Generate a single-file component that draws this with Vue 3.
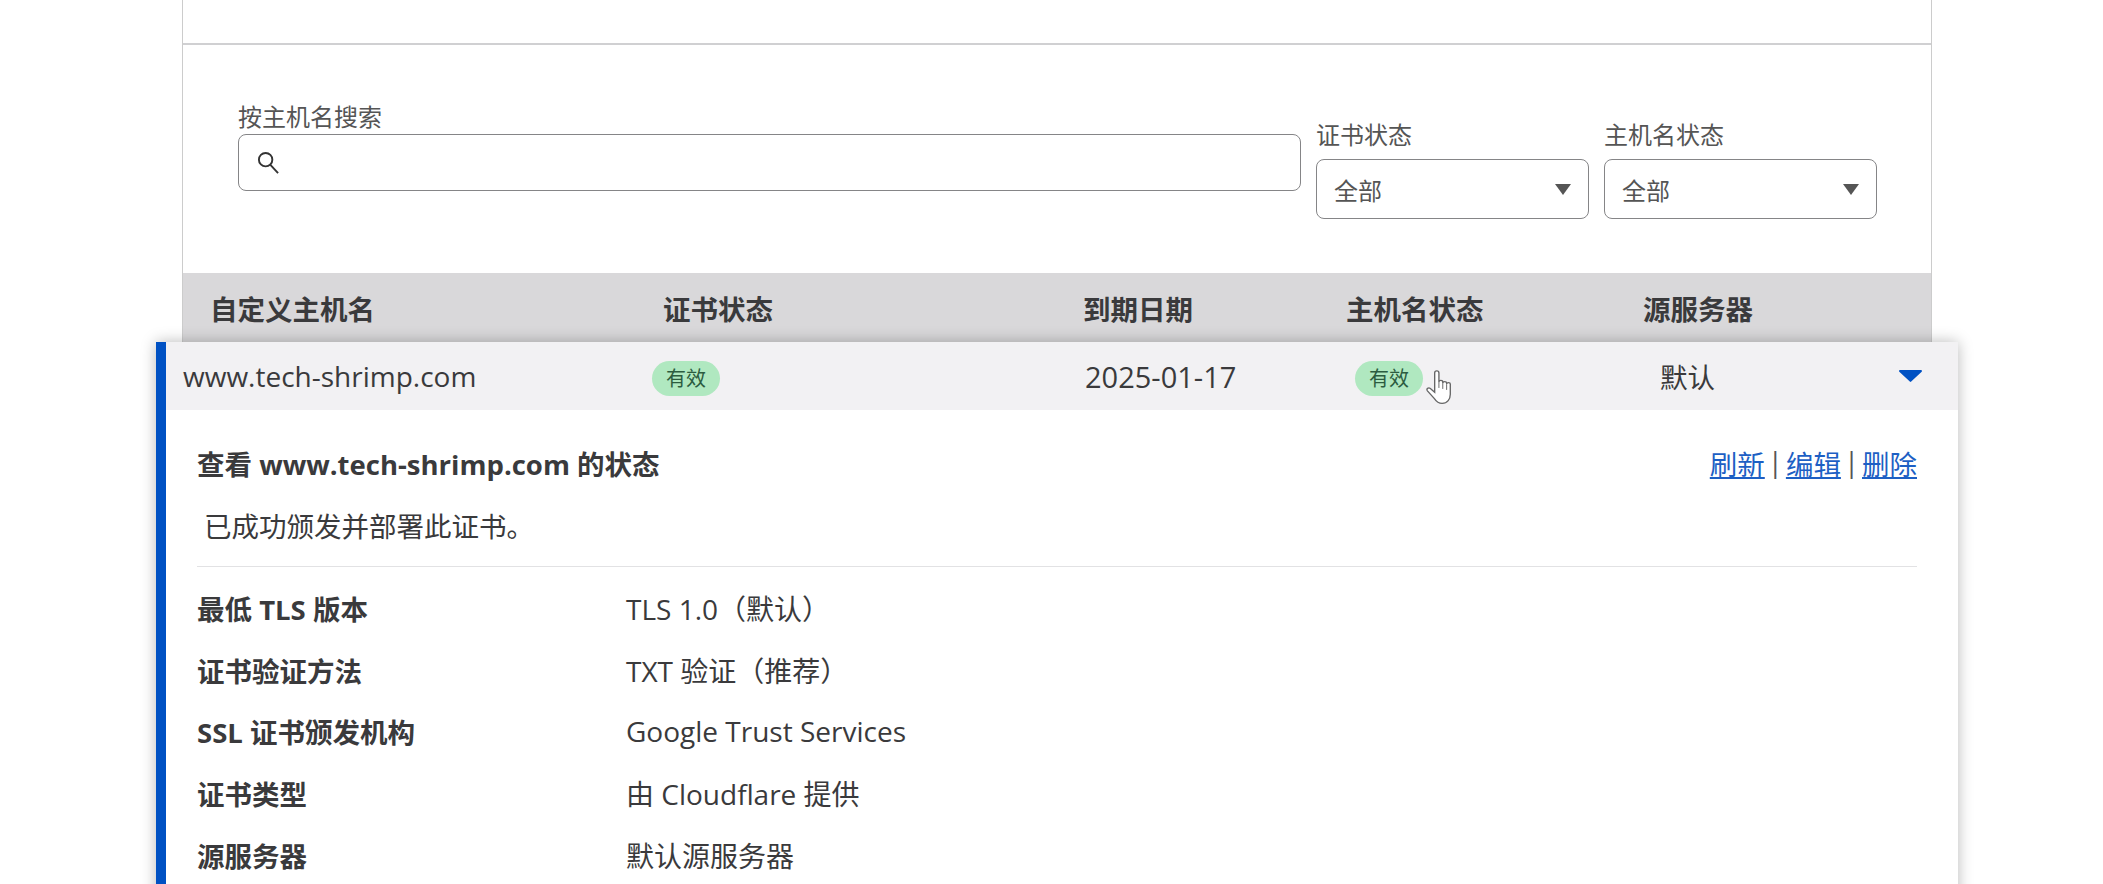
<template>
  <div class="page">
    <div class="box">
      <div class="top-space"></div>

      <div class="filters">
        <div class="field search-field">
          <label>按主机名搜索</label>
          <div class="search-input">
            <svg class="search-icon" viewBox="0 0 24 24">
              <circle cx="9" cy="9" r="7" />
              <path d="M14 14.5l8 8.5" />
            </svg>
            <input type="text" />
          </div>
        </div>
        <div v-for="f in selects" :key="f" class="field select-field">
          <label>{{ f }}</label>
          <div class="select">
            <span>全部</span>
            <svg class="select-arrow" viewBox="0 0 16 11"><path d="M0 0h16l-8 11z" /></svg>
          </div>
        </div>
      </div>

      <div class="thead">
        <div v-for="c in columns" :key="c">{{ c }}</div>
      </div>

      <div class="panel">
        <div class="row">
          <div class="host">www.tech-shrimp.com</div>
          <div><span class="badge">有效</span></div>
          <div class="date">2025-01-17</div>
          <div class="cursor-cell">
            <span class="badge">有效</span>
            <svg class="hand" viewBox="0 0 28 37">
              <path class="hand-body" d="M9 4a2.2 2.2 0 0 1 4.4 0v9.5c0-2.4 4-2.4 4 0v1c0-2.2 4-2.2 4 0v1c0-2 3.8-2 3.8 0V26c0 5-3 9.5-8.5 9.5-4 0-6-2-8-5L1.5 22.5c-1.5-2 1-4 3-2.5L9 24Z" />
              <path class="hand-lines" d="M13.4 13.5v6M17.4 14.5v6M21.4 15.5v6" />
            </svg>
          </div>
          <div>默认</div>
          <svg class="chevron" viewBox="0 0 23 12"><path d="M1 0h21a1 1 0 0 1 .7 1.7L12.2 11.6a1 1 0 0 1-1.4 0L.3 1.7A1 1 0 0 1 1 0z" /></svg>
        </div>

        <div class="detail">
          <div class="detail-head">
            <h3>查看 www.tech-shrimp.com 的状态</h3>
            <div class="links">
              <template v-for="(l, i) in links" :key="l">
                <span v-if="i > 0" class="sep">|</span>
                <a href="#">{{ l }}</a>
              </template>
            </div>
          </div>
          <p class="message">已成功颁发并部署此证书。</p>
          <div class="info">
            <div v-for="item in info" :key="item.label" class="info-row">
              <div class="info-label">{{ item.label }}</div>
              <div>{{ item.value }}</div>
            </div>
          </div>
        </div>
      </div>
    </div>
  </div>
</template>

<script setup>
const selects = ['证书状态', '主机名状态']
const columns = ['自定义主机名', '证书状态', '到期日期', '主机名状态', '源服务器']
const links = ['刷新', '编辑', '删除']
const info = [
  { label: '最低 TLS 版本', value: 'TLS 1.0（默认）' },
  { label: '证书验证方法', value: 'TXT 验证（推荐）' },
  { label: 'SSL 证书颁发机构', value: 'Google Trust Services' },
  { label: '证书类型', value: '由 Cloudflare 提供' },
  { label: '源服务器', value: '默认源服务器' }
]
</script>

<style>
body {
  background: #fff;
}
</style>

<style scoped>
.page {
  height: 884px;
  overflow: hidden;
  padding-left: 182px;
  font-family: "Open Sans", "Noto Sans CJK SC", sans-serif;
  color: #3a3a3c;
  font-size: 27.5px;
}

.box {
  width: 1750px;
  box-sizing: border-box;
  border-left: 1px solid #ccc;
  border-right: 1px solid #ccc;
}

.top-space {
  height: 43px;
  border-bottom: 2px solid #d0d0d2;
}

.filters {
  display: flex;
  height: 228px;
  box-sizing: border-box;
  padding: 55px 54px 0 55px;
  gap: 15px;
}

.field label {
  display: block;
  font-size: 24px;
  line-height: 34px;
  color: #555;
}

.search-field {
  flex: 1;
}

.search-input {
  display: flex;
  align-items: center;
  height: 57px;
  box-sizing: border-box;
  border: 1px solid #858587;
  border-radius: 8px;
  padding-left: 18px;
}

.search-icon {
  width: 23px;
  height: 23px;
  fill: none;
  stroke: #333;
  stroke-width: 2;
}

.search-input input {
  flex: 1;
  border: none;
  outline: none;
  background: transparent;
}

.select-field {
  width: 273px;
  padding-top: 18px;
}

.select-field label {
  margin-bottom: 7px;
}

.select {
  display: flex;
  align-items: center;
  justify-content: space-between;
  height: 60px;
  box-sizing: border-box;
  border: 1px solid #858587;
  border-radius: 8px;
  padding: 0 17px;
  font-size: 24px;
  color: #555;
}

.select-arrow {
  width: 16px;
  height: 11px;
  fill: #555;
}

.thead {
  display: grid;
  grid-template-columns: 453px 420px 263px 297px 1fr;
  align-items: center;
  height: 69px;
  padding-left: 27px;
  background: #d9d8da;
  font-weight: 700;
}

.panel {
  position: relative;
  z-index: 1;
  margin: 0 -27px 0 -27px;
  height: 600px;
  background: #fff;
  border-left: 10px solid #0051c3;
  box-shadow: 0 0 14px rgba(0, 0, 0, 0.28);
}

.row {
  display: grid;
  grid-template-columns: 469px 433px 270px 305px 1fr auto;
  align-items: center;
  height: 68px;
  padding: 0 36px 0 17px;
  background: #f2f1f3;
}

.host {
  font-size: 28px;
}

.date {
  font-size: 29px;
}

.badge {
  display: inline-block;
  width: 68px;
  height: 35px;
  line-height: 35px;
  border-radius: 18px;
  background: #b0e8c0;
  color: #2c5c40;
  font-size: 20px;
  text-align: center;
}

.cursor-cell {
  position: relative;
}

.hand {
  position: absolute;
  left: 71px;
  top: 11px;
  width: 27px;
  height: 38px;
}

.hand-body {
  fill: #fff;
  stroke: #666;
  stroke-width: 1.4;
}

.hand-lines {
  fill: none;
  stroke: #666;
  stroke-width: 1;
}

.chevron {
  width: 23px;
  height: 12px;
  fill: #0051c3;
}

.detail {
  padding: 34px 41px 0 31px;
}

.detail-head {
  display: flex;
  justify-content: space-between;
  align-items: center;
  height: 38px;
}

.detail-head h3 {
  margin: 0;
  font-size: 27.5px;
  font-weight: 700;
}

.links {
  display: flex;
  gap: 3px;
}

.links a {
  color: #1d5fc4;
}

.sep {
  color: #555;
}

.message {
  margin: 26px 0 0;
  padding: 0 0 20px 7px;
  height: 38px;
  line-height: 38px;
  border-bottom: 1px solid #e2e2e4;
}

.info {
  padding-top: 10px;
}

.info-row {
  display: grid;
  grid-template-columns: 429px 1fr;
  align-items: center;
  height: 61.7px;
}

.info-row > div:last-child {
  font-size: 28px;
}

.info-label {
  font-weight: 700;
}
</style>
